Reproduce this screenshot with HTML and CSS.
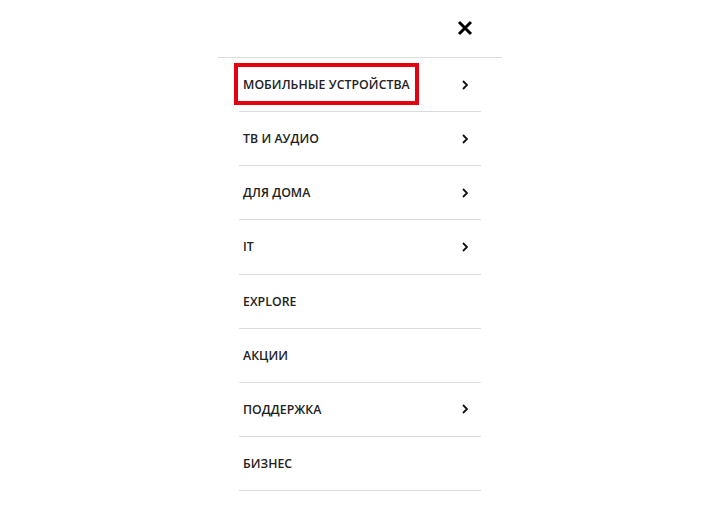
FILE: index.html
```html
<!DOCTYPE html>
<html lang="ru">
<head>
<meta charset="utf-8">
<title>Меню</title>
<link rel="stylesheet" href="styles.css">
</head>
<body>
<nav class="panel">
  <div class="panel-head">
    <button class="close" aria-label="Закрыть">
      <svg width="16" height="16" viewBox="0 0 16 16"><path d="M2 2L14 14M14 2L2 14" stroke="#000" stroke-width="3" stroke-linecap="butt" fill="none"/></svg>
    </button>
  </div>
  <ul class="menu">
    <li class="item"><span class="label highlight">МОБИЛЬНЫЕ УСТРОЙСТВА</span><svg class="chev" width="6" height="10" viewBox="0 0 6 10"><path d="M1 1L5 5L1 9" stroke="#111" stroke-width="1.8" fill="none"/></svg></li>
    <li class="item"><span class="label">ТВ И АУДИО</span><svg class="chev" width="6" height="10" viewBox="0 0 6 10"><path d="M1 1L5 5L1 9" stroke="#111" stroke-width="1.8" fill="none"/></svg></li>
    <li class="item"><span class="label">ДЛЯ ДОМА</span><svg class="chev" width="6" height="10" viewBox="0 0 6 10"><path d="M1 1L5 5L1 9" stroke="#111" stroke-width="1.8" fill="none"/></svg></li>
    <li class="item"><span class="label">IT</span><svg class="chev" width="6" height="10" viewBox="0 0 6 10"><path d="M1 1L5 5L1 9" stroke="#111" stroke-width="1.8" fill="none"/></svg></li>
    <li class="item"><span class="label">EXPLORE</span></li>
    <li class="item"><span class="label">АКЦИИ</span></li>
    <li class="item"><span class="label">ПОДДЕРЖКА</span><svg class="chev" width="6" height="10" viewBox="0 0 6 10"><path d="M1 1L5 5L1 9" stroke="#111" stroke-width="1.8" fill="none"/></svg></li>
    <li class="item"><span class="label">БИЗНЕС</span></li>
  </ul>
</nav>
</body>
</html>
```
FILE: styles.css
```css
html, body {
  margin: 0;
  padding: 0;
  background: #fff;
}
body {
  font-family: "Open Sans", "Liberation Sans", sans-serif;
  color: #222;
  overflow: hidden;
}
.panel {
  width: 284px;
  margin: 0 auto;
}
.panel-head {
  height: 57px;
  border-bottom: 1px solid #dcdcdc;
  display: flex;
  justify-content: flex-end;
  align-items: center;
  padding-right: 29px;
}
.close {
  border: 0;
  background: none;
  padding: 0;
  width: 16px;
  height: 16px;
  display: flex;
  cursor: pointer;
  margin-bottom: 2px;
}
.menu {
  list-style: none;
  margin: 0;
  padding: 0 21px;
}
.item {
  height: 53.14px;
  border-bottom: 1px solid #dcdcdc;
  display: flex;
  align-items: center;
  justify-content: space-between;
  padding: 0 13px 0 4px;
}
.label {
  font-size: 12.3px;
  font-weight: 600;
  letter-spacing: 0.05px;
  line-height: 16px;
  display: inline-block;
  padding-top: 1px;
}
.highlight {
  padding: 10px 5px 8px;
  margin: -10px -5px -8px;
  outline: 4px solid #e50012;
}
.chev {
  display: block;
}
```
